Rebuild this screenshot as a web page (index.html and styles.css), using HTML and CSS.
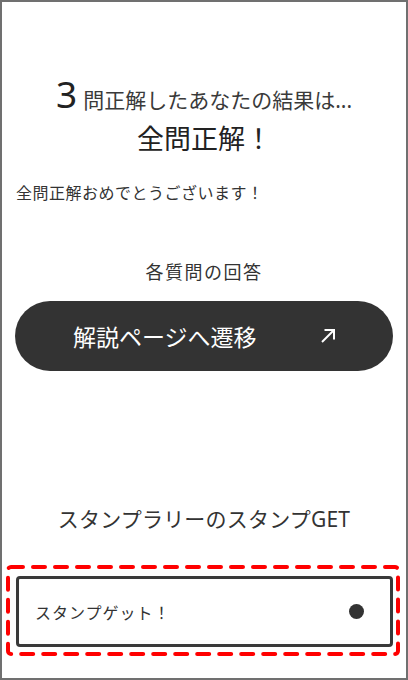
FILE: index.html
```html
<!DOCTYPE html>
<html lang="ja">
<head>
  <meta charset="UTF-8">
  <title>診断結果</title>
  <link rel="stylesheet" href="styles.css">
</head>
<body>

<div class="frame">
  <main class="result">
    <p class="result-lead"><span class="result-count">3</span>問正解したあなたの結果は...</p>
    <h1 class="result-title">全問正解！</h1>
    <p class="result-message">全問正解おめでとうございます！</p>

    <!-- 各質問の回答 -->
    <section class="answers">
      <h2 class="section-title">各質問の回答</h2>
      <a class="link-button" href="#">
        <span>解説ページへ遷移</span>
        <svg class="link-icon" width="16" height="16" viewBox="0 0 16 16" fill="none" stroke="#fff" stroke-width="2">
          <path d="M4.5 2 H14 V11.5"/>
          <path d="M14 2 L2 14"/>
        </svg>
      </a>
    </section>

    <!-- スタンプラリー -->
    <section class="stamp">
      <h2 class="section-title stamp-title">スタンプラリーのスタンプGET</h2>
      <div class="stamp-highlight">
        <svg class="dash-outline" width="394" height="91">
          <rect x="2" y="2" width="390" height="87" rx="3" fill="none" stroke="#ff0000" stroke-width="4" stroke-dasharray="12 10" stroke-linecap="round"/>
        </svg>
        <div class="stamp-card">
          <span>スタンプゲット！</span>
          <span class="stamp-dot"></span>
        </div>
      </div>
    </section>
  </main>
</div>

</body>
</html>
```

FILE: styles.css
```css
html, body {
  margin: 0;
  background: #fff;
}
body {
  font-family: "Noto Sans", "Noto Sans CJK JP", sans-serif;
  color: #333;
}
.frame {
  box-sizing: border-box;
  width: 408px;
  height: 680px;
  border: 2px solid #707070;
  overflow: hidden;
}
.result {
  padding: 74px 13px 0 13px;
}
p, h1, h2 {
  margin: 0;
  font-weight: normal;
}
.result-lead {
  display: flex;
  justify-content: center;
  align-items: baseline;
  font-size: 21px;
  line-height: 36px;
  color: #3a3a3a;
}
.result-count {
  font-size: 37px;
  color: #222;
  margin-right: 6px;
}
.result-title {
  margin-top: 4px;
  text-align: center;
  font-size: 27px;
  line-height: 34px;
  color: #222;
  padding-left: 1px;
}
.result-message {
  margin-top: 25px;
  padding-left: 1px;
  font-size: 16px;
  line-height: 24px;
  letter-spacing: 0.5px;
}
.section-title {
  text-align: center;
  font-size: 18px;
  line-height: 26px;
  letter-spacing: 1.5px;
}
.answers {
  margin-top: 54px;
}
.link-button {
  margin-top: 16px;
  height: 70px;
  box-sizing: border-box;
  border-radius: 35px;
  background: #333;
  color: #fff;
  text-decoration: none;
  display: flex;
  align-items: center;
  justify-content: space-between;
  padding: 0 57px 0 58px;
  font-size: 23px;
}
.link-icon {
  display: block;
}
.stamp {
  margin-top: 134px;
}
.stamp-title {
  font-size: 21px;
  line-height: 28px;
  letter-spacing: 0.2px;
}
.stamp-highlight {
  position: relative;
  margin: 32px -7px 0 -9px;
  padding: 11px 7px 9px 10px;
}
.dash-outline {
  position: absolute;
  left: 0;
  top: 0;
}
.stamp-card {
  position: relative;
  box-sizing: border-box;
  height: 71px;
  border: 3px solid #3a3a3a;
  border-radius: 4px;
  display: flex;
  align-items: center;
  justify-content: space-between;
  padding: 0 26px 0 16px;
  font-size: 16px;
  letter-spacing: 1px;
}
.stamp-dot {
  width: 15px;
  height: 15px;
  border-radius: 50%;
  background: #333;
}
```
